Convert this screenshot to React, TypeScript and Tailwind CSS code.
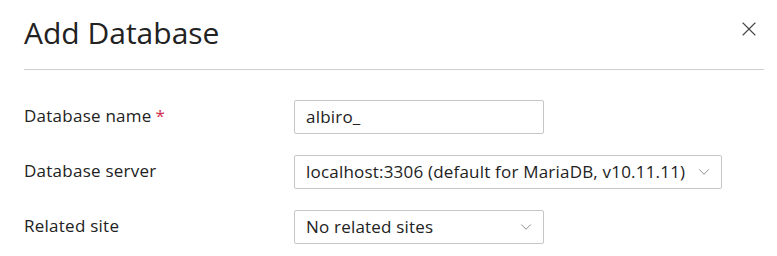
import { X, ChevronDown } from 'lucide-react';

const font = { fontFamily: '"Open Sans", "Noto Sans", sans-serif' };

function Row({ label, required, children }: { label: string; required?: boolean; children: React.ReactNode }) {
  return (
    <div className="flex items-center h-[34px]">
      <div className="w-[270px] text-[17px] tracking-[0.25px] text-[#222] -mt-[2px]">
        {label}
        {required && <span className="text-[#d02d4c] ml-1">*</span>}
      </div>
      {children}
    </div>
  );
}

export default function App() {
  return (
    <div className="w-[777px] h-[256px] bg-white overflow-hidden" style={font}>
      <div className="ml-6 mr-[13px] flex items-center justify-between border-b border-[#cfcfcf] h-[70px]">
        <h1 className="text-[30px] text-[#222] leading-none -mt-1">Add Database</h1>
        <X size={24} strokeWidth={1.1} className="text-[#444] -mt-3 mr-[3px]" />
      </div>
      <div className="px-6 pt-[30px] flex flex-col gap-[21px]">
        <Row label="Database name" required>
          <div className="w-[250px] h-[34px] border border-[#c6c6c6] rounded-[2px] px-[11px] flex items-center text-[17px] tracking-[0.2px] text-[#222]">
            albiro_
          </div>
        </Row>
        <Row label="Database server">
          <div className="w-[428px] h-[34px] border border-[#c6c6c6] rounded-[2px] pl-[11px] pr-[8px] flex items-center justify-between text-[17px] tracking-[0.2px] text-[#222]">
            <span>localhost:3306 (default for MariaDB, v10.11.11)</span>
            <ChevronDown size={18} strokeWidth={1.1} className="text-[#777]" />
          </div>
        </Row>
        <Row label="Related site">
          <div className="w-[250px] h-[34px] border border-[#c6c6c6] rounded-[2px] pl-[11px] pr-[8px] flex items-center justify-between text-[17px] tracking-[0.2px] text-[#222]">
            <span>No related sites</span>
            <ChevronDown size={18} strokeWidth={1.1} className="text-[#777]" />
          </div>
        </Row>
      </div>
    </div>
  );
}
